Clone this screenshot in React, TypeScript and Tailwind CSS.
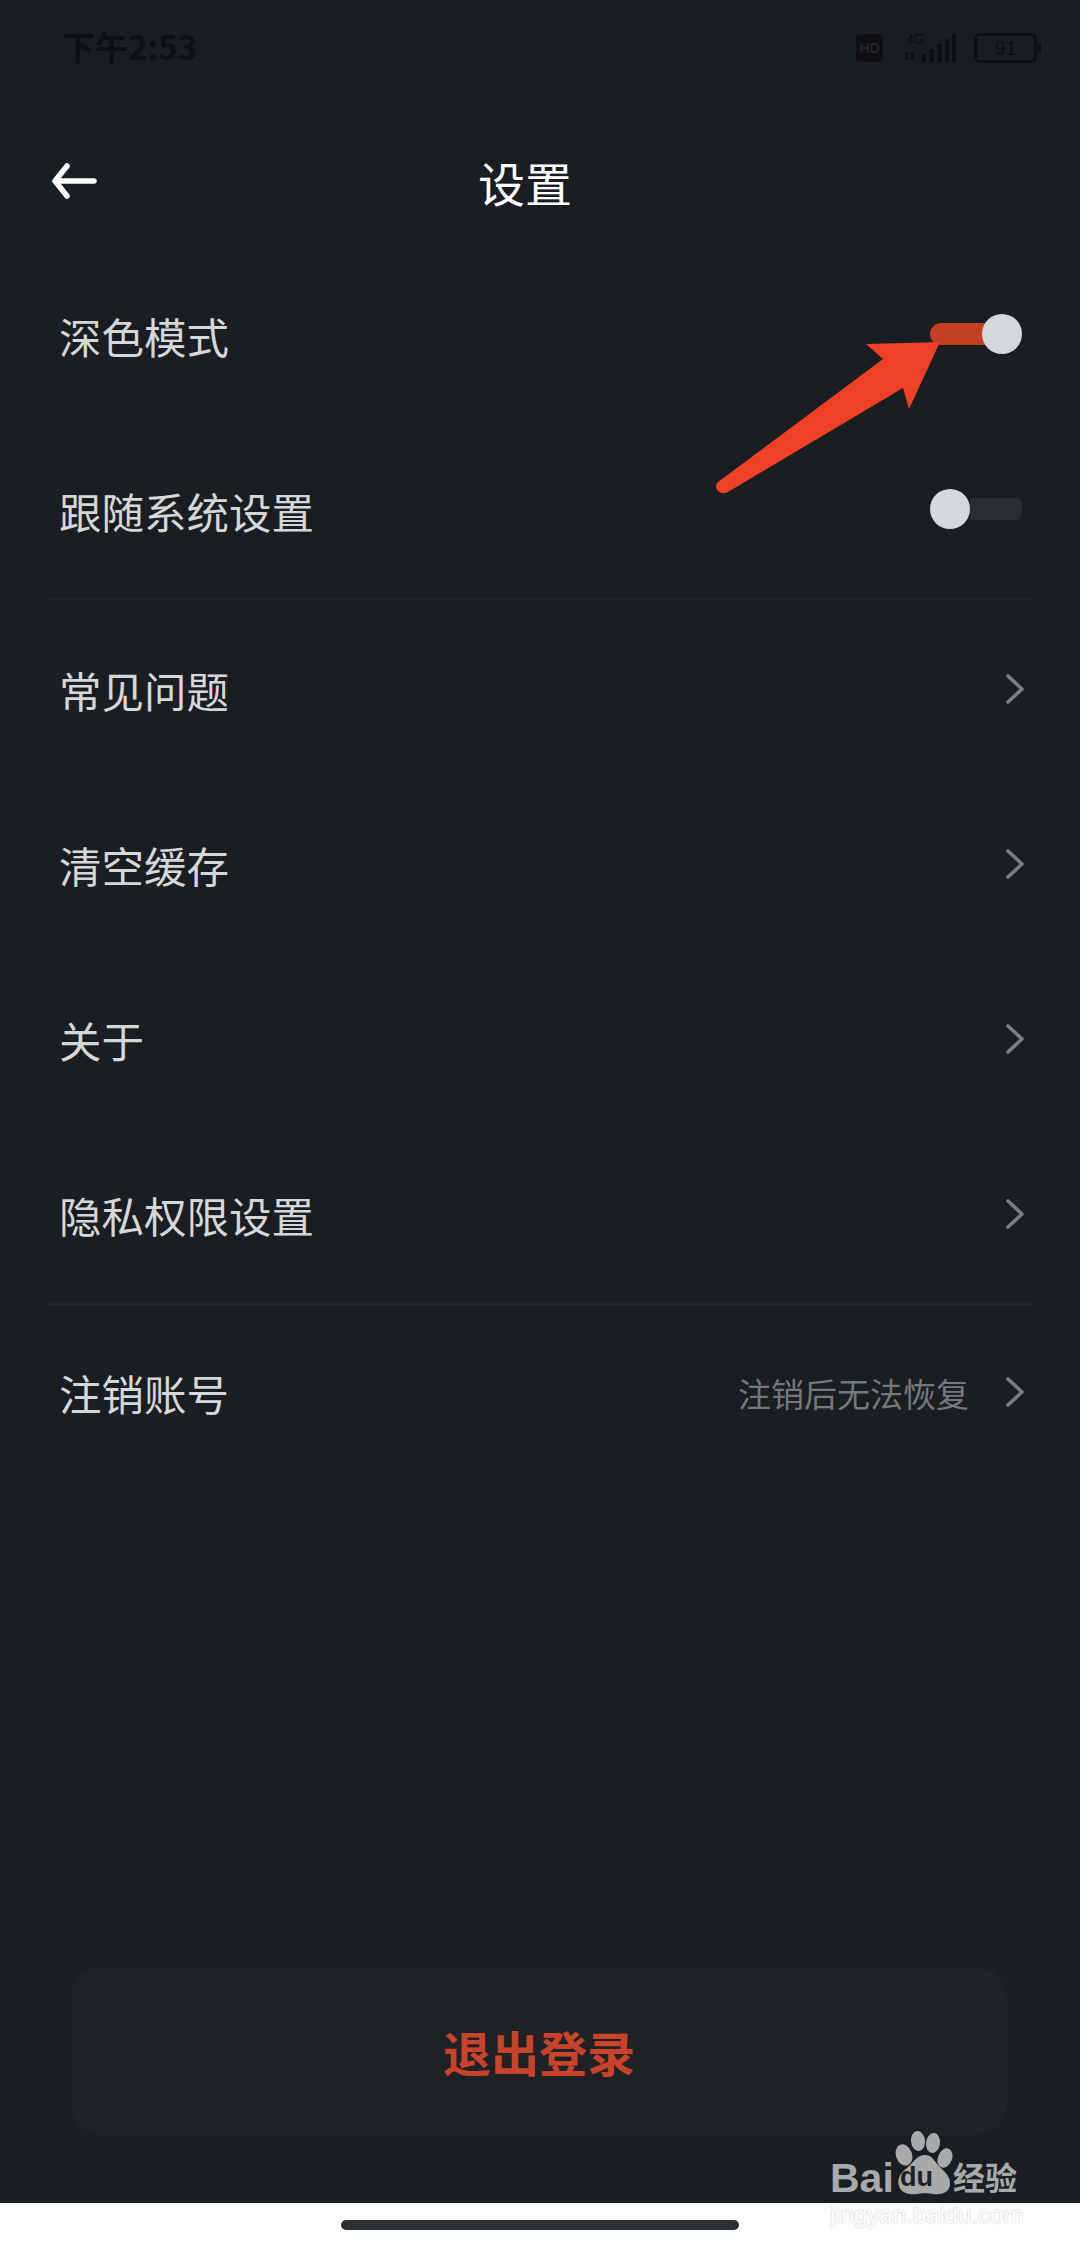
const cjk = "font-['Noto_Sans_CJK_SC','Noto_Sans',sans-serif]";

function Chevron() {
  return (
    <svg width="20" height="32" viewBox="0 0 20 32" fill="none" className="mb-[8px] -mr-[3px]">
      <path d="M3 3 L17 16 L3 29" stroke="#7b7e80" strokeWidth="3.6" strokeLinecap="round" strokeLinejoin="round" />
    </svg>
  );
}

function ToggleOn() {
  return (
    <div className="flex items-center mb-[10px]">
      <div className="w-[60px] h-[22px] rounded-l-full bg-[#c43f22]" />
      <div className="w-[40px] h-[40px] -ml-[8px] rounded-full bg-[#d5d8da]" />
    </div>
  );
}

function ToggleOff() {
  return (
    <div className="flex items-center mb-[10px] w-[92px]">
      <div className="w-[40px] h-[40px] rounded-full bg-[#d5d8da] shrink-0" />
      <div className="w-[52px] h-[22px] rounded-r-md bg-[#2a2d30]" />
    </div>
  );
}

function Row({ label, children }: { label: string; children?: React.ReactNode }) {
  return (
    <div className="h-[169px] flex items-center justify-between pl-[59px] pr-[58px]">
      <span className="text-[42.5px] leading-[56px] text-[#d5d7d8] mb-[5px]">{label}</span>
      <div className="flex items-center">{children}</div>
    </div>
  );
}

function StatusBar() {
  return (
    <div className="h-[96px] flex items-center justify-between pl-[62px] pr-[39px] text-[#0d0f11]">
      <span className="text-[33px] font-bold leading-none mb-[3px]">下午2:53</span>
      <div className="flex items-center">
        <div className="w-[27px] h-[28px] rounded-[4px] bg-[#0d0f11] flex items-center justify-center text-[14px] font-bold text-[#23272a] font-['Liberation_Sans',sans-serif]">
          HD
        </div>
        <svg width="54" height="32" viewBox="0 0 54 32" className="ml-[20px]">
          <text x="3" y="12" fontSize="14" fill="#0d0f11" fontFamily="Liberation Sans">4G</text>
          <rect x="2" y="20" width="3" height="8" fill="#0d0f11" />
          <rect x="8" y="20" width="3" height="8" fill="#0d0f11" />
          <rect x="18" y="22" width="5" height="8" fill="#0d0f11" />
          <rect x="26" y="17" width="5" height="13" fill="#0d0f11" />
          <rect x="34" y="12" width="5" height="18" fill="#0d0f11" />
          <rect x="42" y="7" width="4" height="23" fill="#0d0f11" />
          <rect x="49" y="1" width="4" height="29" fill="#0d0f11" />
        </svg>
        <div className="ml-[17px] flex items-center">
          <div className="w-[63px] h-[30px] rounded-[6px] border-[3px] border-[#0d0f11] flex items-center justify-center text-[20px] font-['Liberation_Sans',sans-serif] leading-none">
            91
          </div>
          <div className="w-[3px] h-[12px] ml-[1px] rounded-r bg-[#0d0f11]" />
        </div>
      </div>
    </div>
  );
}

function Watermark() {
  return (
    <div className="absolute left-[830px] top-[2130px] w-[200px] h-[100px]">
      <svg width="60" height="66" viewBox="0 0 60 66" className="absolute left-[64px] top-[1px]">
        <g fill="#a8a9aa">
          <ellipse cx="10" cy="24" rx="8" ry="11" transform="rotate(-20 10 24)" />
          <ellipse cx="24" cy="10" rx="7" ry="10" transform="rotate(-6 24 10)" />
          <ellipse cx="39" cy="12" rx="7" ry="10" transform="rotate(8 39 12)" />
          <ellipse cx="51" cy="27" rx="7" ry="10" transform="rotate(22 51 27)" />
          <path d="M31 24 C23 24 20 31 13 37 C6 42 3 48 5 55 C7 62 15 64 23 63 C27 62 35 62 39 63 C47 64 55 62 56 54 C57 47 52 42 47 37 C41 32 39 24 31 24 Z" />
        </g>
      </svg>
      <span className="absolute left-[0px] top-[26px] text-[41px] leading-[44px] font-bold text-[#a8a9aa] font-['Liberation_Sans',sans-serif]">
        Bai
      </span>
      <span className="absolute left-[70px] top-[32px] text-[27px] leading-[30px] font-bold text-[#1d2024] font-['Liberation_Sans',sans-serif]">
        du
      </span>
      <span className={`absolute left-[123px] top-[27px] text-[32px] leading-[38px] font-bold text-[#a8a9aa] ${cjk}`}>
        经验
      </span>
      <span className="absolute left-[0px] top-[70px] text-[24px] leading-[30px] text-white font-['Liberation_Sans',sans-serif] [text-shadow:0_0_2px_#b8babc]">
        jingyan.baidu.com
      </span>
    </div>
  );
}

export default function App() {
  return (
    <div className={`relative w-[1080px] h-[2248px] flex flex-col bg-white overflow-hidden ${cjk}`}>
      <div className="flex-1 flex flex-col bg-[#1a1d21]">
        <StatusBar />

        {/* title bar */}
        <div className="relative h-[158px] pt-[20px] pr-[30px] flex items-center justify-center">
          <svg width="46" height="36" viewBox="0 0 46 36" fill="none" className="absolute left-[51px] top-[67px]">
            <path d="M43 18 L4 18 M16 3 L4 18 L16 33" stroke="#ffffff" strokeWidth="5.5" strokeLinecap="round" strokeLinejoin="round" />
          </svg>
          <h1 className="text-[47px] leading-[60px] text-white font-normal mb-[6px]">设置</h1>
        </div>

        <div className="flex flex-col gap-[6px]">
          <Row label="深色模式">
            <ToggleOn />
          </Row>
          <Row label="跟随系统设置">
            <ToggleOff />
          </Row>
        </div>

        <div className="h-[3px] mx-[48px] bg-[#1f2326]" />

        <div className="mt-[7px] flex flex-col gap-[6px]">
          <Row label="常见问题">
            <Chevron />
          </Row>
          <Row label="清空缓存">
            <Chevron />
          </Row>
          <Row label="关于">
            <Chevron />
          </Row>
          <Row label="隐私权限设置">
            <Chevron />
          </Row>
        </div>

        <div className="h-[3px] mx-[48px] bg-[#232629]" />

        <div className="mt-[6px]">
          <Row label="注销账号">
            <span className="text-[33px] leading-[44px] text-[#76797b] mr-[36px] mb-[5px]">注销后无法恢复</span>
            <Chevron />
          </Row>
        </div>

        <div className="flex-1 flex items-end justify-center pb-[68px]">
          <button className="w-[936px] h-[168px] rounded-[30px] bg-[#1e2225] text-[48px] font-bold text-[#c8432a] -ml-[2px]">
            退出登录
          </button>
        </div>
      </div>

      {/* home indicator */}
      <div className="h-[45px] flex items-center justify-center bg-white">
        <div className="w-[398px] h-[10px] rounded-full bg-[#2c3033] -mt-[2px]" />
      </div>

      {/* red annotation arrow over the toggle */}
      <svg width="1080" height="500" viewBox="0 0 1080 500" className="absolute left-0 top-0 pointer-events-none">
        <path
          d="M940 342 L866 344 L883 359 L718 482 Q714 486 718 491 Q722 495 728 492 L903 388 L909 409 Z"
          fill="#ee4024"
        />
      </svg>

      <Watermark />
    </div>
  );
}
